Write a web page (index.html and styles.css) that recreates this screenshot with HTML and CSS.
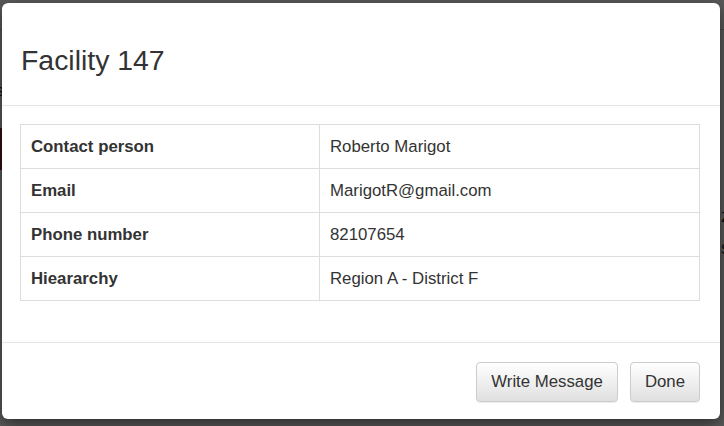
FILE: index.html
```html
<!DOCTYPE html>
<html>
<head>
<meta charset="utf-8">
<link rel="stylesheet" href="styles.css">
</head>
<body>
<div class="page">
  <nav class="nav">
    <span class="nav-item">Dashboard</span>
    <span class="nav-item">Analysis</span>
    <span class="nav-item">Annual Report</span>
    <span class="nav-item">About</span>
    <span class="nav-item">More</span>
  </nav>
  <div class="page-body">
    <div class="side-text">s</div>
    <div class="red-block"></div>
    <div class="right-text">z<br>s</div>
  </div>
</div>
<div class="backdrop"></div>
<div class="modal">
  <div class="modal-header">
    <h4 class="modal-title">Facility 147</h4>
  </div>
  <div class="modal-body">
    <table class="info-table">
      <tr><th>Contact person</th><td>Roberto Marigot</td></tr>
      <tr><th>Email</th><td>MarigotR@gmail.com</td></tr>
      <tr><th>Phone number</th><td>82107654</td></tr>
      <tr><th>Hieararchy</th><td>Region A - District F</td></tr>
    </table>
  </div>
  <div class="modal-footer">
    <button class="btn">Write Message</button>
    <button class="btn">Done</button>
  </div>
</div>
</body>
</html>
```

FILE: styles.css
```css
* { box-sizing: border-box; }
html, body { margin: 0; padding: 0; }
body {
  width: 724px;
  height: 426px;
  overflow: hidden;
  background: #fff;
  font-family: "Liberation Sans", Arial, sans-serif;
  color: #333;
  position: relative;
}
.page { height: 426px; }
.nav {
  display: flex;
  gap: 60px;
  padding: 0 0 0 4px;
  height: 40px;
  margin-top: -10px;
  align-items: center;
  font-size: 16px;
  color: #555;
  border-bottom: 1px solid #ccc;
}
.page-body { position: relative; height: 380px; }
.side-text { position: absolute; left: -4px; top: 52px; font-size: 16px; }
.red-block { position: absolute; left: 0; top: 98px; width: 10px; height: 42px; background: #8a2a2a; }
.right-text { position: absolute; right: -6px; top: 170px; font-size: 18px; line-height: 32px; }
.backdrop {
  position: absolute;
  inset: 0;
  background: rgba(0, 0, 0, 0.65);
}
.modal {
  position: absolute;
  left: 2px;
  top: 3px;
  width: 718px;
  height: 416px;
  background: #fff;
  border-radius: 6px;
  box-shadow: 0 5px 15px rgba(0,0,0,0.5);
  display: flex;
  flex-direction: column;
}
.modal-header {
  height: 103px;
  padding: 13px 19px 0;
  display: flex;
  align-items: center;
  border-bottom: 1px solid #e5e5e5;
}
.modal-title {
  margin: 0;
  font-size: 28.4px;
  font-weight: normal;
  line-height: 1.1;
  color: #333;
}
.modal-body {
  padding: 18px 20px 0 18px;
  height: 237px;
  border-bottom: 1px solid #e5e5e5;
}
.info-table {
  width: 680px;
  border-collapse: collapse;
  font-size: 16.8px;
  border: 1px solid #ddd;
}
.info-table th, .info-table td {
  border: 1px solid #ddd;
  height: 44px;
  padding: 0 10px;
  text-align: left;
  vertical-align: middle;
  line-height: 22px;
  padding-top: 1px;
}
.info-table th { width: 299px; font-weight: bold; }
.modal-footer {
  flex: 1;
  display: flex;
  justify-content: flex-end;
  align-items: flex-start;
  gap: 12px;
  padding: 19px 20px 0 0;
}
.btn {
  height: 40px;
  padding: 0 14px;
  font-family: "Liberation Sans", Arial, sans-serif;
  font-size: 16.8px;
  color: #333;
  border: 1px solid #ccc;
  border-radius: 4px;
  background: linear-gradient(to bottom, #fff 0%, #e0e0e0 100%);
  box-shadow: inset 0 1px 0 rgba(255,255,255,.15), 0 1px 1px rgba(0,0,0,.075);
}
```
